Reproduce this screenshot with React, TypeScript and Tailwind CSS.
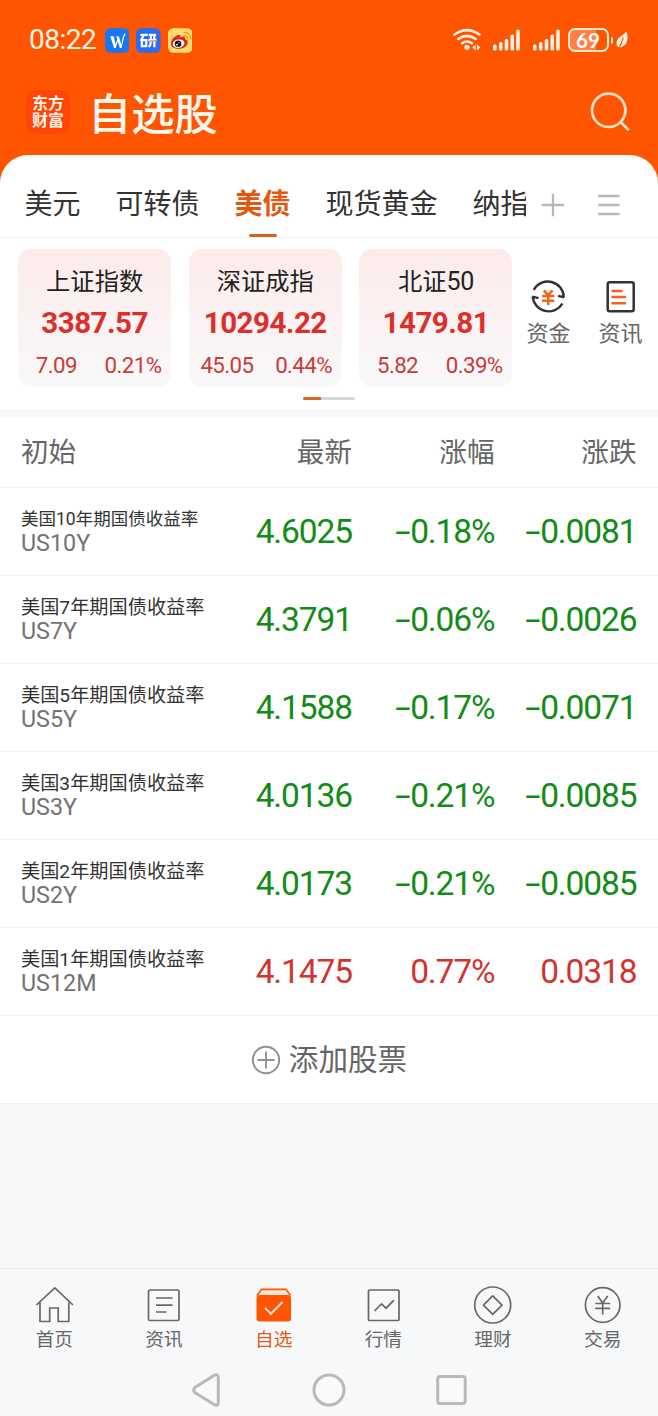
import React from "react";

const quotes = [
  { name: "美国10年期国债收益率", code: "US10Y", last: "4.6025", pct: "-0.18%", chg: "-0.0081", up: false, small: true },
  { name: "美国7年期国债收益率", code: "US7Y", last: "4.3791", pct: "-0.06%", chg: "-0.0026", up: false },
  { name: "美国5年期国债收益率", code: "US5Y", last: "4.1588", pct: "-0.17%", chg: "-0.0071", up: false },
  { name: "美国3年期国债收益率", code: "US3Y", last: "4.0136", pct: "-0.21%", chg: "-0.0085", up: false },
  { name: "美国2年期国债收益率", code: "US2Y", last: "4.0173", pct: "-0.21%", chg: "-0.0085", up: false },
  { name: "美国1年期国债收益率", code: "US12M", last: "4.1475", pct: "0.77%", chg: "0.0318", up: true },
];

const indices = [
  { name: "上证指数", value: "3387.57", diff: "7.09", pct: "0.21%" },
  { name: "深证成指", value: "10294.22", diff: "45.05", pct: "0.44%" },
  { name: "北证50", value: "1479.81", diff: "5.82", pct: "0.39%" },
];

function Signal() {
  return (
    <svg className="h-[22px] w-[27px]" viewBox="0 0 27 22" fill="#fff0e0">
      <rect x="0" y="15.5" width="3.6" height="6" rx="1.5" />
      <rect x="5.9" y="13" width="3.6" height="8.5" rx="1.5" />
      <rect x="11.7" y="10" width="3.6" height="11.5" rx="1.5" />
      <rect x="17.5" y="5.5" width="3.6" height="16" rx="1.5" />
      <rect x="23.2" y="0.5" width="3.6" height="21" rx="1.5" />
    </svg>
  );
}

function StatusBar() {
  return (
    <div className="flex h-[80px] items-center pl-[29px] pr-[29px]">
      <div className="w-[75.5px] pb-[1px] font-[Roboto,sans-serif] text-[28px] leading-none tracking-[-0.500px] text-[#fff6ec]">08:22</div>
      <div className="flex gap-[7px]">
        <svg className="h-[25px] w-[24.5px]" viewBox="0 0 25 25">
          <rect width="25" height="25" rx="5.5" fill="#1677f0" />
          <path d="M5.3 8.2h3.6l2 8.2 1.6-5-1-3.2h2.8l2.3 8 1.6-7.2 1.4-3.4h1.5l-1.5 3-2.8 11.600h-1.600l-2.200-6.800-2 6.800H9.300z" fill="#fff" />
          <path d="M13 8.200h1.800l2.300 8" fill="none" stroke="#1677f0" strokeWidth=".5" />
        </svg>
        <svg className="h-[25px] w-[24.5px]" viewBox="0 0 25 25">
          <rect width="25" height="25" rx="5.5" fill="#2a6df2" />
          <path d="M4.500 6.700h7.500M8 6.700L5 13M6 12v6.300h4.500V12H6.500M13 6.700h7.500M12.500 12h8.500M15.200 6.700v6q0 4-2 6.500M18.700 6.700v12.800" fill="none" stroke="#fff" strokeWidth="2.300" />
          <path d="M13.500 13.300l8-.9" fill="none" stroke="#c9a95b" strokeWidth="1.500" />
        </svg>
        <svg className="h-[25px] w-[24.5px]" viewBox="0 0 25 25">
          <rect width="25" height="25" rx="5.500" fill="#ffdc70" />
          <path d="M3 15.500c0-4 5-9 8.500-8.500 1.500.2 1.300 1.500 1.100 2.200 2.700-1.200 5.400-1 4.900 1.800 2 .7 3 2 2.500 4.200-.8 3.200-4.500 5.800-9.200 5.800S3 18.800 3 15.500z" fill="#e3281d" />
          <ellipse cx="10.800" cy="15.700" rx="6" ry="4.300" fill="#fff" transform="rotate(-8 10.800 15.700)" />
          <circle cx="10.300" cy="15.700" r="3.300" fill="#111" />
          <circle cx="9.200" cy="16.700" r="1" fill="#fff" />
          <circle cx="11.300" cy="14.700" r=".6" fill="#fff" />
          <path d="M16.500 7.600c2.300-.3 3.800 1.400 3.300 3.600M16.300 4.300c4.200-.5 7.300 2.500 6.500 7.200" fill="none" stroke="#f2a11e" strokeWidth="1.500" strokeLinecap="round" />
        </svg>
      </div>
      <div className="ml-auto flex items-center">
        <svg className="h-[24px] w-[29px]" viewBox="452 28 29 24" fill="none" stroke="#fff0e0" strokeWidth="2.600" strokeLinecap="round">
          <path d="M453.700 34.500Q466 25.700 478.300 34.500M457.300 39Q466 32.600 474.700 39M461.200 43.200Q466 39.800 470.800 43.200" />
          <circle cx="466" cy="47.300" r="2.600" fill="#fff0e0" stroke="none" />
          <path d="M471.300 47.500l3.300-2.900v5.800zM479.500 47.500l-3.600-2.900v5.800z" fill="#fff0e0" stroke="none" />
        </svg>
        <div className="ml-[11px]"><Signal /></div>
        <div className="ml-[13px]"><Signal /></div>
        <div className="ml-[8px] flex items-center">
          <div className="flex h-[24px] w-[41px] items-center justify-center rounded-[7px] border-2 border-[#ffe9d2] bg-[linear-gradient(90deg,#ff7f45_70%,#ff5500_70%)] font-[Lato,sans-serif] text-[20.500px] font-bold leading-none text-white">69</div>
          <div className="ml-[2px] h-[7px] w-[2.500px] rounded-r bg-[#ffe9d2]" />
        </div>
        <svg className="ml-[2px] h-[18px] w-[14px]" viewBox="0 0 14 18">
          <path d="M11.500.5C13.500 6 13 14 6.500 16 3.500 17 1.500 16 1.500 12 1.500 6.500 7.500 5 11.500.5z" fill="#fff0e0" />
          <path d="M3.500 17.500Q6.500 13 8.300 6.500" fill="none" stroke="#ff5500" strokeWidth="1.100" />
        </svg>
      </div>
    </div>
  );
}

function Header() {
  return (
    <div className="flex h-[75px] items-start pl-[26px] pr-[26px]">
      <div className="mt-[10px] flex h-[44px] w-[44px] flex-col items-center rounded-[9px] bg-[#ff4408] pt-[3.500px] text-[16px] font-bold leading-[17.800px] text-[#fff3e6]">
        <span>东方</span>
        <span>财富</span>
      </div>
      <h1 className="ml-[18px] mt-[10px] text-[43.300px] font-medium leading-none text-[#fff6ec]">自选股</h1>
      <svg className="ml-auto mt-[10px] h-[44px] w-[44px]" viewBox="588 90 44 44" fill="none" stroke="#ffe0c8" strokeWidth="2.700">
        <circle cx="608.700" cy="110.300" r="16.700" />
        <path d="M620.300 121.800l8.500 8.400" />
      </svg>
    </div>
  );
}

function Tabs() {
  return (
    <div className="flex h-[82.500px] border-b border-[#f0f1f3]">
      <div className="flex w-[526px] gap-[35px] overflow-hidden whitespace-nowrap pl-[24.500px] pt-[32.500px] text-[28px] leading-none text-[#333]">
        <span className="shrink-0">美元</span>
        <span className="shrink-0">可转债</span>
        <span className="flex h-[49px] shrink-0 flex-col items-center justify-between font-bold text-[#e35710]">
          美债
          <i className="h-[3px] w-[28px] rounded-full bg-[#d9601f]" />
        </span>
        <span className="shrink-0">现货黄金</span>
        <span className="shrink-0">纳指</span>
      </div>
      <svg className="ml-[15px] mt-[37px] h-[26px] w-[24px]" viewBox="0 0 24 26" fill="none" stroke="#b8b8b8" strokeWidth="2.300">
        <path d="M.8 13H23.200M12 1.700v22.500" />
      </svg>
      <svg className="ml-[32px] mt-[37px] h-[26px] w-[24px]" viewBox="0 0 24 26" fill="none" stroke="#b8b8b8" strokeWidth="2.300">
        <path d="M1.200 4H22.500M1.200 13H22.500M1.200 22H22.500" />
      </svg>
    </div>
  );
}

function IndexPanel() {
  return (
    <div className="flex h-[171px] flex-col">
      <div className="flex pl-[18px] pt-[11px]">
        <div className="flex gap-[17.300px]">
          {indices.map((q) => (
            <div key={q.name} className="flex h-[138.500px] w-[153.300px] flex-col items-center rounded-[13px] bg-gradient-to-b from-[#fdebeb] to-[#f9f9fa] leading-none">
              <div className="mt-[19.500px] flex h-[24.300px] items-center text-[24.300px] text-[#222]">
                {q.name.replace("50", "")}
                {q.name.endsWith("50") && <span className="pt-[2px] font-[Roboto,sans-serif] text-[25px] tracking-[-0.500px]">50</span>}
              </div>
              <div className="mt-[16.700px] font-[Roboto,sans-serif] text-[29.500px] font-bold tracking-[-0.500px] text-[#dc2f2c]">{q.value}</div>
              <div className="mt-[15.500px] grid w-full grid-cols-2 text-center font-[Roboto,sans-serif] text-[22.300px] tracking-[-0.600px] text-[#cb3a37]">
                <span>{q.diff}</span>
                <span>{q.pct}</span>
              </div>
            </div>
          ))}
        </div>
        <div className="ml-[14px] mt-[29px] flex w-[44px] flex-col items-center">
          <svg className="h-[38px] w-[38px]" viewBox="529.500 278 38 38" fill="none" strokeWidth="2.400">
            <path d="M534.300 289.800A16 16 0 0 1 564.300 297.200M564.800 297.300l-6.200-1.500M562.900 303.500A16 16 0 0 1 533.200 296.500M532.800 296.600l6.200 1.600" stroke="#333" />
            <path d="M544.300 290.500l4.400 4.400 4.400-4.400M542.500 296h12.400M542.500 300.700h12.400M548.700 295v10" stroke="#f0641e" strokeWidth="2.500" />
          </svg>
          <span className="mt-[4.500px] text-[22px] leading-none text-[#666]">资金</span>
        </div>
        <div className="ml-[28px] mt-[29px] flex w-[44px] flex-col items-center">
          <svg className="h-[38px] w-[38px]" viewBox="601.500 278 38 38" fill="none" strokeWidth="2.500">
            <rect x="608.200" y="282.200" width="26" height="29" rx="2" stroke="#333" />
            <path d="M613 291h9M613 297h12.500M613 303.300h12.500" stroke="#f0641e" strokeLinecap="round" />
          </svg>
          <span className="mt-[4.500px] text-[22px] leading-none text-[#666]">资讯</span>
        </div>
      </div>
      <div className="ml-[303px] mt-[9.500px] flex h-[3px] w-[52px] overflow-hidden rounded-full bg-[#d5d8db]">
        <div className="w-[17.500px] bg-[#dc6424]" />
      </div>
    </div>
  );
}

function Quotes() {
  return (
    <div className="grid grid-cols-[236px_116px_142.500px_142px_21.500px] leading-none">
      <div className="col-span-5 grid h-[71px] grid-cols-subgrid items-center border-b border-[#f0f0f1] pb-[3px] text-[27.600px] text-[#666]">
        <span className="pl-[21px]">初始</span>
        <span className="text-right">最新</span>
        <span className="text-right">涨幅</span>
        <span className="text-right">涨跌</span>
      </div>
      {quotes.map((q) => (
        <div key={q.code} className="col-span-5 grid h-[88px] grid-cols-subgrid items-center border-b border-[#f0f0f1]">
          <div className="flex flex-col whitespace-nowrap pl-[21px] font-[Roboto,'Noto_Sans_CJK_SC',sans-serif]">
            <span className={q.small ? "flex h-[23px] items-center text-[17.500px] text-[#333]" : "flex h-[23px] items-center text-[19.200px] text-[#333]"}>{q.name}</span>
            <span className="mt-[1px] text-[23.300px] text-[#737373]">{q.code}</span>
          </div>
          {[q.last, q.pct, q.chg].map((v, i) => (
            <span
              key={i}
              className={
                q.up
                  ? "flex items-center justify-end pt-[1px] font-[Roboto,sans-serif] text-[33.500px] tracking-[-1.100px] text-[#d13430]"
                  : "flex items-center justify-end pt-[1px] font-[Roboto,sans-serif] text-[33.500px] tracking-[-1.100px] text-[#128c16]"
              }
            >
              {v.startsWith("-") && <span className="mr-[3.500px] inline-block scale-x-[1.650]">-</span>}
              {v.replace("-", "")}
            </span>
          ))}
        </div>
      ))}
    </div>
  );
}

const nav = [
  { label: "首页", icon: <path d="M1.500 19L19.800 2 38 19M5 16.500v19h9.700V22h8.500v13.500h10.600v-19" /> },
  { label: "资讯", icon: <><rect x="4.500" y="4" width="30.500" height="30.500" rx="1.500" /><path d="M12 12h16.500M12 19.200h16.500M12 26h10.500" /></> },
  { label: "自选", active: true, icon: <><path d="M3 9.500l4.500-6.200h24.500l4.500 6.200" fill="#ffe7d8" stroke="#ff5500" /><rect x="2.500" y="9" width="34.500" height="26.500" rx="3" fill="#ff5500" stroke="none" /><path d="M11 22l6 5.800 11.500-11.800" stroke="#ffe7d8" strokeWidth="2" /></> },
  { label: "行情", icon: <><rect x="4.500" y="4" width="30.500" height="30.500" rx="1" /><path d="M10.500 25l7-7 4.500 4.200 8-8" /></> },
  { label: "理财", icon: <><circle cx="19.700" cy="19" r="18" /><path d="M19.700 9.800l9.300 9.300-9.300 9.300-9.300-9.300z" strokeLinejoin="round" /></> },
  { label: "交易", icon: <><circle cx="19.700" cy="19" r="17.300" /><path d="M14.700 10l5 7 5-7M12.300 17.500h14.800M12.300 22.300h14.800M19.700 17v11.500" /></> },
];

export default function App() {
  return (
    <div className="flex h-[1416px] w-[658px] flex-col overflow-hidden bg-[#f7f8fa] font-['Noto_Sans_CJK_SC',sans-serif]">
      <div className="bg-[#ff5500]">
        <StatusBar />
        <Header />
        <div className="rounded-t-[28px] bg-white">
          <Tabs />
          <IndexPanel />
        </div>
      </div>
      <div className="mt-[8.500px] bg-white">
        <Quotes />
        <div className="flex h-[88px] items-center justify-center gap-[8px] border-b border-[#eeeff1]">
          <svg className="h-[30px] w-[30px]" viewBox="0 0 30 30" fill="none" stroke="#909090" strokeWidth="1.900">
            <circle cx="15" cy="15" r="13.200" />
            <path d="M6.500 15h17M15 6.500v17" />
          </svg>
          <span className="pb-[4px] text-[29.600px] leading-none text-[#666]">添加股票</span>
        </div>
      </div>
      <div className="mt-auto h-[148px] border-t border-[#ebecee]">
        <div className="grid h-[84px] grid-cols-6 pt-[17px]">
          {nav.map((n) => (
            <div key={n.label} className="flex flex-col items-center">
              <svg className="h-[40px] w-[40px]" viewBox="0 0 40 40" fill="none" stroke="#686868" strokeWidth="1.700">{n.icon}</svg>
              <span className={n.active ? "mt-[3px] pr-[1px] text-[18.700px] leading-none text-[#e05c18]" : "mt-[3px] pr-[1px] text-[18.700px] leading-none text-[#666]"}>{n.label}</span>
            </div>
          ))}
        </div>
        <div className="flex pl-[190px] pt-[19px]">
          <svg className="h-[36px] w-[278px]" viewBox="190 1372 278 36" fill="#fafafa" stroke="#b9b9b9" strokeWidth="3">
            <path d="M194.800 1387.500L214.500 1375.200Q218.300 1373.500 218.300 1377.500V1402.500Q218.300 1406.500 214.500 1404.700L194.800 1392.500Q192.500 1390 194.800 1387.500z" />
            <circle cx="329" cy="1390" r="15" />
            <rect x="437.700" y="1376.500" width="27.500" height="27" rx="2.500" />
          </svg>
        </div>
      </div>
    </div>
  );
}
